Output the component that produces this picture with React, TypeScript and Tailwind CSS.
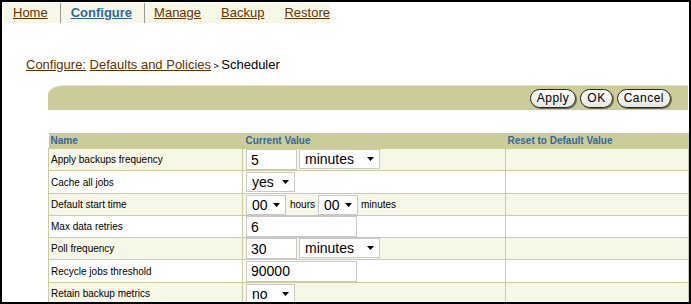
import React from "react";

const tabs = [
  { label: "Home", gap: "ml-[9px]" },
  { label: "Configure", gap: "ml-[10px]", active: true },
  { label: "Manage", gap: "ml-[9px]" },
  { label: "Backup", gap: "ml-[20px]" },
  { label: "Restore", gap: "ml-[20px]" },
];

function Arrow() {
  return (
    <svg width="7" height="4" viewBox="0 0 7 4" className="shrink-0">
      <path d="M0 0h7L3.5 4z" fill="#000" />
    </svg>
  );
}

function Select({ value, w }: { value: string; w: string }) {
  return (
    <div
      className={`flex h-[20px] ${w} items-center justify-between border border-[#c9c9c9] bg-white pl-[5px] pr-[5px] text-[14px] leading-none text-black`}
    >
      <span>{value}</span>
      <Arrow />
    </div>
  );
}

function Input({ value, w }: { value: string; w: string }) {
  return (
    <div
      className={`flex h-[21px] ${w} items-center border border-[#c9c9c9] bg-white pl-[4px] text-[14px] leading-none text-black`}
    >
      {value}
    </div>
  );
}

function PillButton({ label }: { label: string }) {
  return (
    <button className="h-[19px] rounded-full border border-[#2b2b1a] bg-gradient-to-b from-white to-[#e6e6e0] px-[6px] text-[12px] leading-none tracking-[0.5px] text-black shadow-[1px_1px_0_#6b6b4a]">
      {label}
    </button>
  );
}

const rows: { name: string; h: string; value: React.ReactNode }[] = [
  {
    name: "Apply backups frequency",
    h: "h-[22px]",
    value: (
      <div className="flex gap-[2px]">
        <Input value="5" w="w-[51px]" />
        <Select value="minutes" w="w-[81px]" />
      </div>
    ),
  },
  { name: "Cache all jobs", h: "h-[23px]", value: <Select value="yes" w="w-[49px]" /> },
  {
    name: "Default start time",
    h: "h-[22px]",
    value: (
      <div className="flex items-center">
        <Select value="00" w="w-[40px]" />
        <span className="ml-[4px] mr-[3px] text-[10px]">hours</span>
        <Select value="00" w="w-[40px]" />
        <span className="ml-[3px] text-[10px]">minutes</span>
      </div>
    ),
  },
  { name: "Max data retries", h: "h-[22px]", value: <Input value="6" w="w-[111px]" /> },
  {
    name: "Poll frequency",
    h: "h-[22px]",
    value: (
      <div className="flex gap-[2px]">
        <Input value="30" w="w-[51px]" />
        <Select value="minutes" w="w-[81px]" />
      </div>
    ),
  },
  { name: "Recycle jobs threshold", h: "h-[23px]", value: <Input value="90000" w="w-[111px]" /> },
  { name: "Retain backup metrics", h: "h-[22px]", value: <Select value="no" w="w-[49px]" /> },
];

export default function App() {
  return (
    <div className="h-[304px] w-[691px] overflow-hidden border-2 border-black bg-white font-['Liberation_Sans',Arial,sans-serif]">
      {/* global tabs */}
      <div className="ml-[2px] mt-[1px] flex h-[20px] w-[326px] items-stretch bg-[#f7f7e7] text-[13px]">
        {tabs.map((t, i) => (
          <React.Fragment key={t.label}>
            <a
              className={`${t.gap} self-center underline ${
                t.active ? "font-bold text-[#336699]" : "text-[#663300]"
              }`}
            >
              {t.label}
            </a>
            {i < 2 && <span className="ml-[12px] w-[1px] bg-[#999999]" />}
          </React.Fragment>
        ))}
      </div>

      {/* breadcrumb */}
      <div className="ml-[24px] mt-[34px] h-[15px] text-[13px] leading-[15px] text-black">
        <a className="text-[#663300] underline">Configure:</a>{" "}
        <a className="text-[#663300] underline">Defaults and Policies</a>
        <span className="text-[9px]"> &gt; </span>
        Scheduler
      </div>

      {/* page header bar with buttons */}
      <div className="ml-[46px] mr-[1px] mt-[13px] flex h-[25px] items-center justify-end gap-[4px] rounded-tl-[15px_10px] border-t border-[#e2e2cc] bg-[#cccc99] pr-[17px]">
        <PillButton label="Apply" />
        <PillButton label="OK" />
        <PillButton label="Cancel" />
      </div>

      {/* settings table */}
      <table className="ml-[46px] mt-[23px] w-[640px] table-fixed border-collapse text-[10px]">
        <colgroup>
          <col className="w-[194px]" />
          <col className="w-[263px]" />
          <col className="w-[183px]" />
        </colgroup>
        <thead>
          <tr className="h-[15px] bg-[#cccc99] text-left font-bold text-[#336699]">
            <th className="pl-[2px] font-bold">Name</th>
            <th className="pl-[3px] font-bold">Current Value</th>
            <th className="pl-[2px] font-bold">Reset to Default Value</th>
          </tr>
        </thead>
        <tbody>
          {rows.map((r, i) => (
            <tr key={r.name} className={`${r.h} ${i % 2 === 0 ? "bg-[#f7f7e7]" : "bg-white"}`}>
              <td className="border border-[#cccc99] pl-[2px] text-black">{r.name}</td>
              <td className="border border-[#cccc99] pl-[3px]">{r.value}</td>
              <td className="border border-[#cccc99]" />
            </tr>
          ))}
        </tbody>
      </table>
    </div>
  );
}
